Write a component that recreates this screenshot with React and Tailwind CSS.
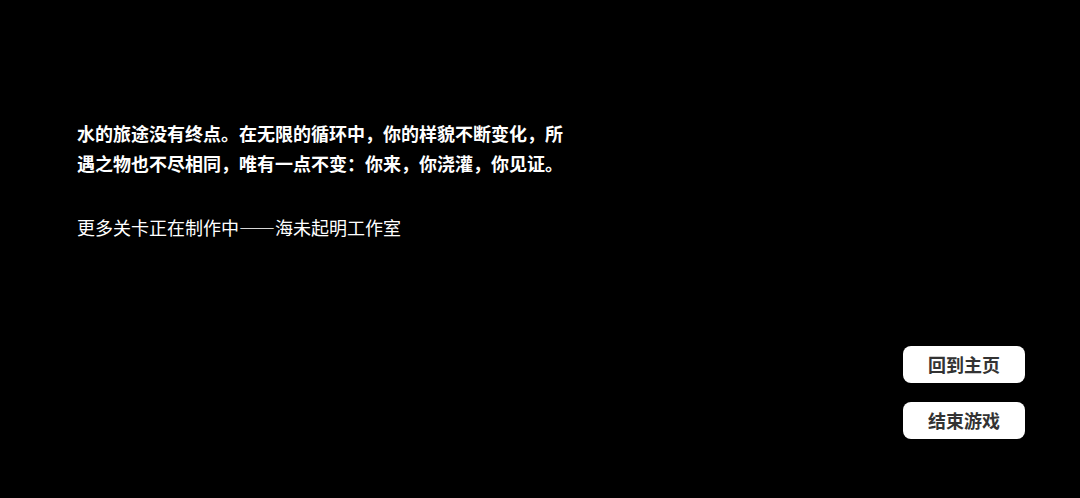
export default function App() {
  return (
    <div
      lang="zh-CN"
      className="flex h-[498px] w-full flex-col bg-black text-white"
      style={{ fontFamily: '"Noto Sans CJK SC", "Noto Sans", sans-serif' }}
    >
      <div className="pl-[77px] pt-[118px]">
        <p className="w-[500px] text-[18px] font-bold leading-[30px]">
          水的旅途没有终点。在无限的循环中，你的样貌不断变化，所遇之物也不尽相同，唯有一点不变：你来，你浇灌，你见证。
        </p>
        <p className="mt-[34px] text-[18px] leading-[30px]">
          更多关卡正在制作中<span className="[font-feature-settings:'fwid']">——</span>海未起明工作室
        </p>
      </div>
      <div className="flex-1" />
      <div className="mb-[59px] mr-[55px] flex flex-col gap-[19px] self-end">
        <button className="flex h-[37px] w-[122px] items-center justify-center rounded-[8px] bg-white text-[18px] font-bold text-[#333333]">
          回到主页
        </button>
        <button className="flex h-[37px] w-[122px] items-center justify-center rounded-[8px] bg-white text-[18px] font-bold text-[#333333]">
          结束游戏
        </button>
      </div>
    </div>
  );
}
